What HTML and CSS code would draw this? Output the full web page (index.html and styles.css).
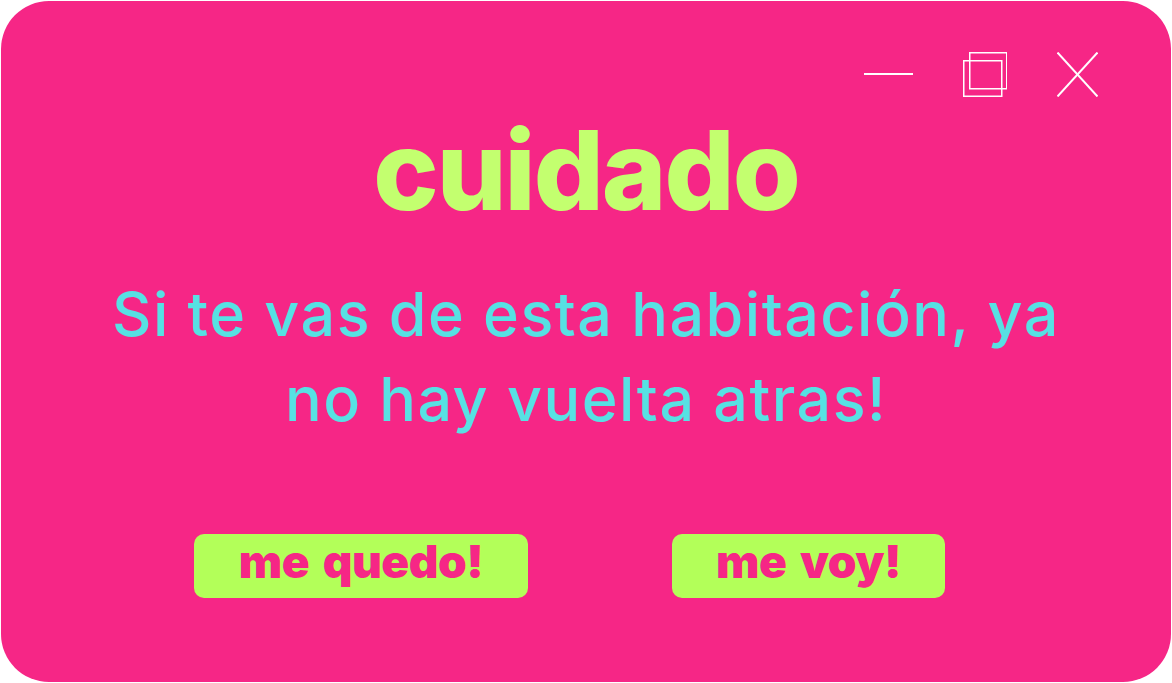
FILE: index.html
```html
<!DOCTYPE html>
<html lang="es">
<head>
<meta charset="utf-8">
<title>cuidado</title>
<link rel="stylesheet" href="styles.css">
</head>
<body>
<div class="window">
  <div class="controls">
    <svg class="icon icon-min" width="49" height="45" viewBox="0 0 49 45"><line x1="0" y1="22" x2="49" y2="22" stroke="#fff" stroke-width="2"/></svg>
    <svg class="icon icon-max" width="44" height="45" viewBox="0 0 44 45"><rect x="6.75" y="0.75" width="37" height="36" fill="none" stroke="#fff" stroke-width="1.5"/><rect x="0.75" y="8.75" width="38" height="35.5" fill="none" stroke="#fff" stroke-width="1.5"/></svg>
    <svg class="icon icon-close" width="41" height="45" viewBox="0 0 41 45"><line x1="0.5" y1="0.5" x2="40.5" y2="44.5" stroke="#fff" stroke-width="2"/><line x1="40.5" y1="0.5" x2="0.5" y2="44.5" stroke="#fff" stroke-width="2"/></svg>
  </div>
  <h1 class="title">cuidado</h1>
  <p class="message">Si te vas de esta habitación, ya<br>no hay vuelta atras!</p>
  <div class="actions">
    <button class="btn btn-stay">me quedo!</button>
    <button class="btn btn-leave">me voy!</button>
  </div>
</div>
</body>
</html>
```

FILE: styles.css
```css
html, body {
  margin: 0;
  padding: 0;
  background: #ffffff;
}

body {
  width: 1172px;
  height: 683px;
  overflow: hidden;
}

.window {
  margin: 1px;
  width: 1170px;
  height: 681px;
  border-radius: 48px;
  background: #f62686;
  display: flex;
  flex-direction: column;
  align-items: center;
  box-sizing: border-box;
  font-family: "Inter", "Liberation Sans", sans-serif;
}

.controls {
  align-self: stretch;
  display: flex;
  justify-content: flex-end;
  align-items: flex-start;
  gap: 50px;
  padding: 51px 73px 0 0;
  height: 45px;
}

.icon {
  display: block;
}

.title {
  margin: 0;
  margin-top: 18px;
  font-size: 110px;
  font-weight: 800;
  line-height: 110px;
  letter-spacing: -2px;
  color: #c3ff6f;
}

.message {
  margin: 0;
  margin-top: 47px;
  font-size: 61px;
  font-weight: 500;
  line-height: 85px;
  letter-spacing: 1.5px;
  text-align: center;
  color: #57e1e3;
}

.actions {
  display: flex;
  gap: 144px;
  padding-right: 33px;
  margin-top: 92px;
}

.btn {
  height: 64px;
  border: none;
  border-radius: 10px;
  background: #b3ff59;
  color: #f62686;
  font-family: "Inter", "Liberation Sans", sans-serif;
  font-weight: 900;
  font-size: 46px;
  line-height: 54px;
  letter-spacing: -0.5px;
  word-spacing: 5px;
  padding: 0 0 10px;
  box-sizing: border-box;
  cursor: pointer;
}

.btn-stay {
  width: 334px;
}

.btn-leave {
  width: 273px;
}
```
